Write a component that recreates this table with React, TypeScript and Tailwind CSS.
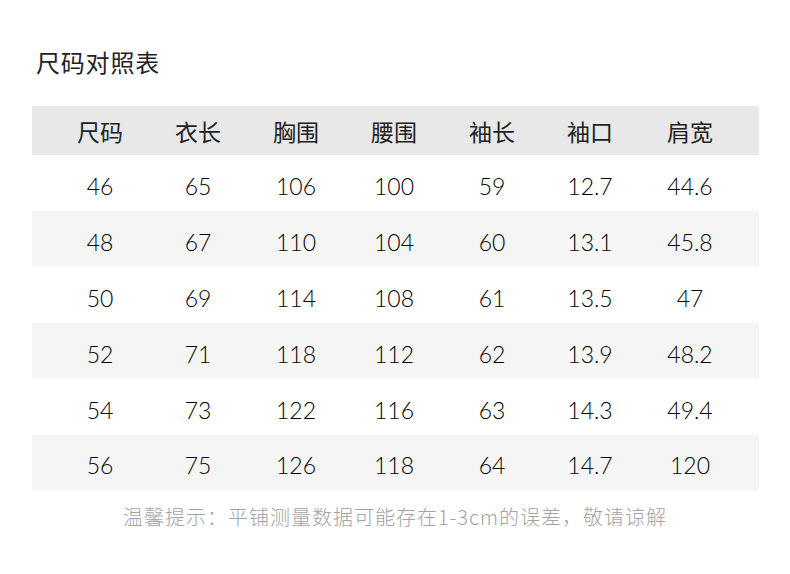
import React from "react";

const headers = ["尺码", "衣长", "胸围", "腰围", "袖长", "袖口", "肩宽"];
const rows = [
  ["46", "65", "106", "100", "59", "12.7", "44.6"],
  ["48", "67", "110", "104", "60", "13.1", "45.8"],
  ["50", "69", "114", "108", "61", "13.5", "47"],
  ["52", "71", "118", "112", "62", "13.9", "48.2"],
  ["54", "73", "122", "116", "63", "14.3", "49.4"],
  ["56", "75", "126", "118", "64", "14.7", "120"],
];

const cjk = { fontFamily: '"Noto Sans CJK SC", "Noto Sans", sans-serif' };
const num = { fontFamily: 'Lato, "Noto Sans", sans-serif' };

export default function App() {
  return (
    <div className="w-[790px] h-[574px] bg-white overflow-hidden">
      <div
        className="pl-[36px] pt-[50px] text-[24px] leading-[24px] text-[#222222] tracking-[0.8px]"
        style={cjk}
      >
        尺码对照表
      </div>
      <div className="ml-[32px] mt-[32px] w-[727px]">
        <div className="grid grid-cols-[98px_98px_98px_98px_98px_98px_102px] pl-[19px] h-[49px] items-center bg-[#e8e8e8]">
          {headers.map((h) => (
            <div
              key={h}
              className="text-center text-[23px] leading-[24px] text-[#222222]"
              style={cjk}
            >
              {h}
            </div>
          ))}
        </div>
        {rows.map((r, i) => (
          <div
            key={r[0]}
            className={
              "grid grid-cols-[98px_98px_98px_98px_98px_98px_102px] pl-[19px] items-center pt-[5px] " +
              (i === rows.length - 1 ? "h-[55px] " : "h-[56px] ") +
              (i % 2 === 1 ? "bg-[#f5f5f5]" : "bg-white")
            }
          >
            {r.map((c, j) => (
              <div
                key={j}
                className="text-center text-[23px] leading-[24px] text-black font-light"
                style={num}
              >
                {c}
              </div>
            ))}
          </div>
        ))}
      </div>
      <div
        className="mt-[16px] text-center text-[20px] leading-[22px] text-[#a3a3a3] tracking-[1px] font-light"
        style={cjk}
      >
        温馨提示：平铺测量数据可能存在1-3cm的误差，敬请谅解
      </div>
    </div>
  );
}
